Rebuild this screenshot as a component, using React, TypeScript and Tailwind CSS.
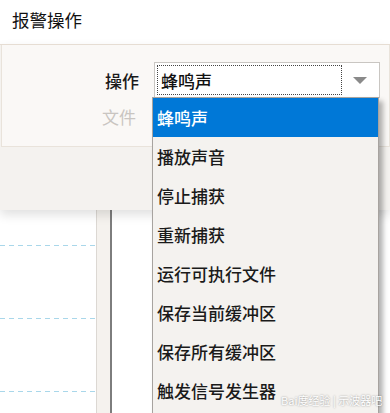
import React from "react";

const items = [
  "蜂鸣声",
  "播放声音",
  "停止捕获",
  "重新捕获",
  "运行可执行文件",
  "保存当前缓冲区",
  "保存所有缓冲区",
  "触发信号发生器",
];

function DashedLine() {
  return (
    <div className="h-px w-full bg-[repeating-linear-gradient(90deg,#a9d7ea_0_5px,transparent_5px_9px)]" />
  );
}

export default function App() {
  return (
    <div
      className="relative w-[390px] h-[413px] overflow-hidden bg-white text-[17px] text-[#111]"
      style={{ fontFamily: '"Noto Sans CJK SC", "Noto Sans", sans-serif' }}
    >
      {/* Title */}
      <div className="h-[44px] px-3 pt-[7px] text-[17.5px] leading-[26px]">报警操作</div>

      {/* Settings panel */}
      <div className="relative z-10 h-[166px] border-t border-[#e6ddd3] bg-[#f4f2ef] shadow-[0_5px_10px_rgba(0,0,0,0.12)]">
        <div className="ml-px border border-t-0 border-[#e9e3db] bg-[#faf8f6] pt-[17px] pb-[11px]">
          <div className="flex items-center">
            <div className="w-[137px] text-right leading-none font-medium text-[#1a1a1a]">操作</div>
            <div className="ml-[15px] flex h-[36px] w-[226px] items-center border border-[#c9c6c2] bg-white p-[2px]">
              <div className="flex h-full w-[185px] items-center border border-dotted border-[#444] pl-[3px] leading-none font-medium">
                蜂鸣声
              </div>
              <div className="flex flex-1 justify-center">
                <svg width="14" height="7" viewBox="0 0 14 7">
                  <path d="M0 0 H14 L7 7 Z" fill="#8a8a8a" />
                </svg>
              </div>
            </div>
          </div>
          <div className="flex h-[37px] items-center">
            <div className="w-[134px] text-right leading-none text-[#c9c5c1]">文件</div>
          </div>
        </div>
      </div>

      {/* Lower area */}
      <div className="flex h-[203px]">
        <div className="w-[97px] border-r border-[#dcd8d3] pt-[35px]">
          <DashedLine />
          <div className="h-[72px]" />
          <DashedLine />
          <div className="h-[72px]" />
          <DashedLine />
        </div>
        <div className="w-[13px] bg-[#f5f2ee]" />
        <div className="w-[2px] bg-[#7d7d7d]" />
        <div className="flex-1 bg-white" />
      </div>

      {/* Dropdown list */}
      <div className="absolute z-20 left-[152px] top-[97px] h-[330px] w-[227px] border border-[#a7a39f] bg-[#f4f2ef] shadow-[4px_4px_5px_rgba(0,0,0,0.3)]">
        {items.map((t, i) => (
          <div
            key={t}
            className={
              i === 0
                ? "flex h-[39px] items-center bg-[#0078d7] pl-[4px] font-medium text-white"
                : "flex h-[39px] items-center pl-[4px] font-medium text-[#1a1a1a]"
            }
          >
            {t}
          </div>
        ))}
      </div>

      {/* Watermark */}
      <div className="absolute z-30 left-[281px] top-[395px] text-[11px] leading-none text-white [text-shadow:0_0_2px_rgba(0,0,0,0.45)]">
        Bai度经验 | 示波器吧
      </div>
    </div>
  );
}
